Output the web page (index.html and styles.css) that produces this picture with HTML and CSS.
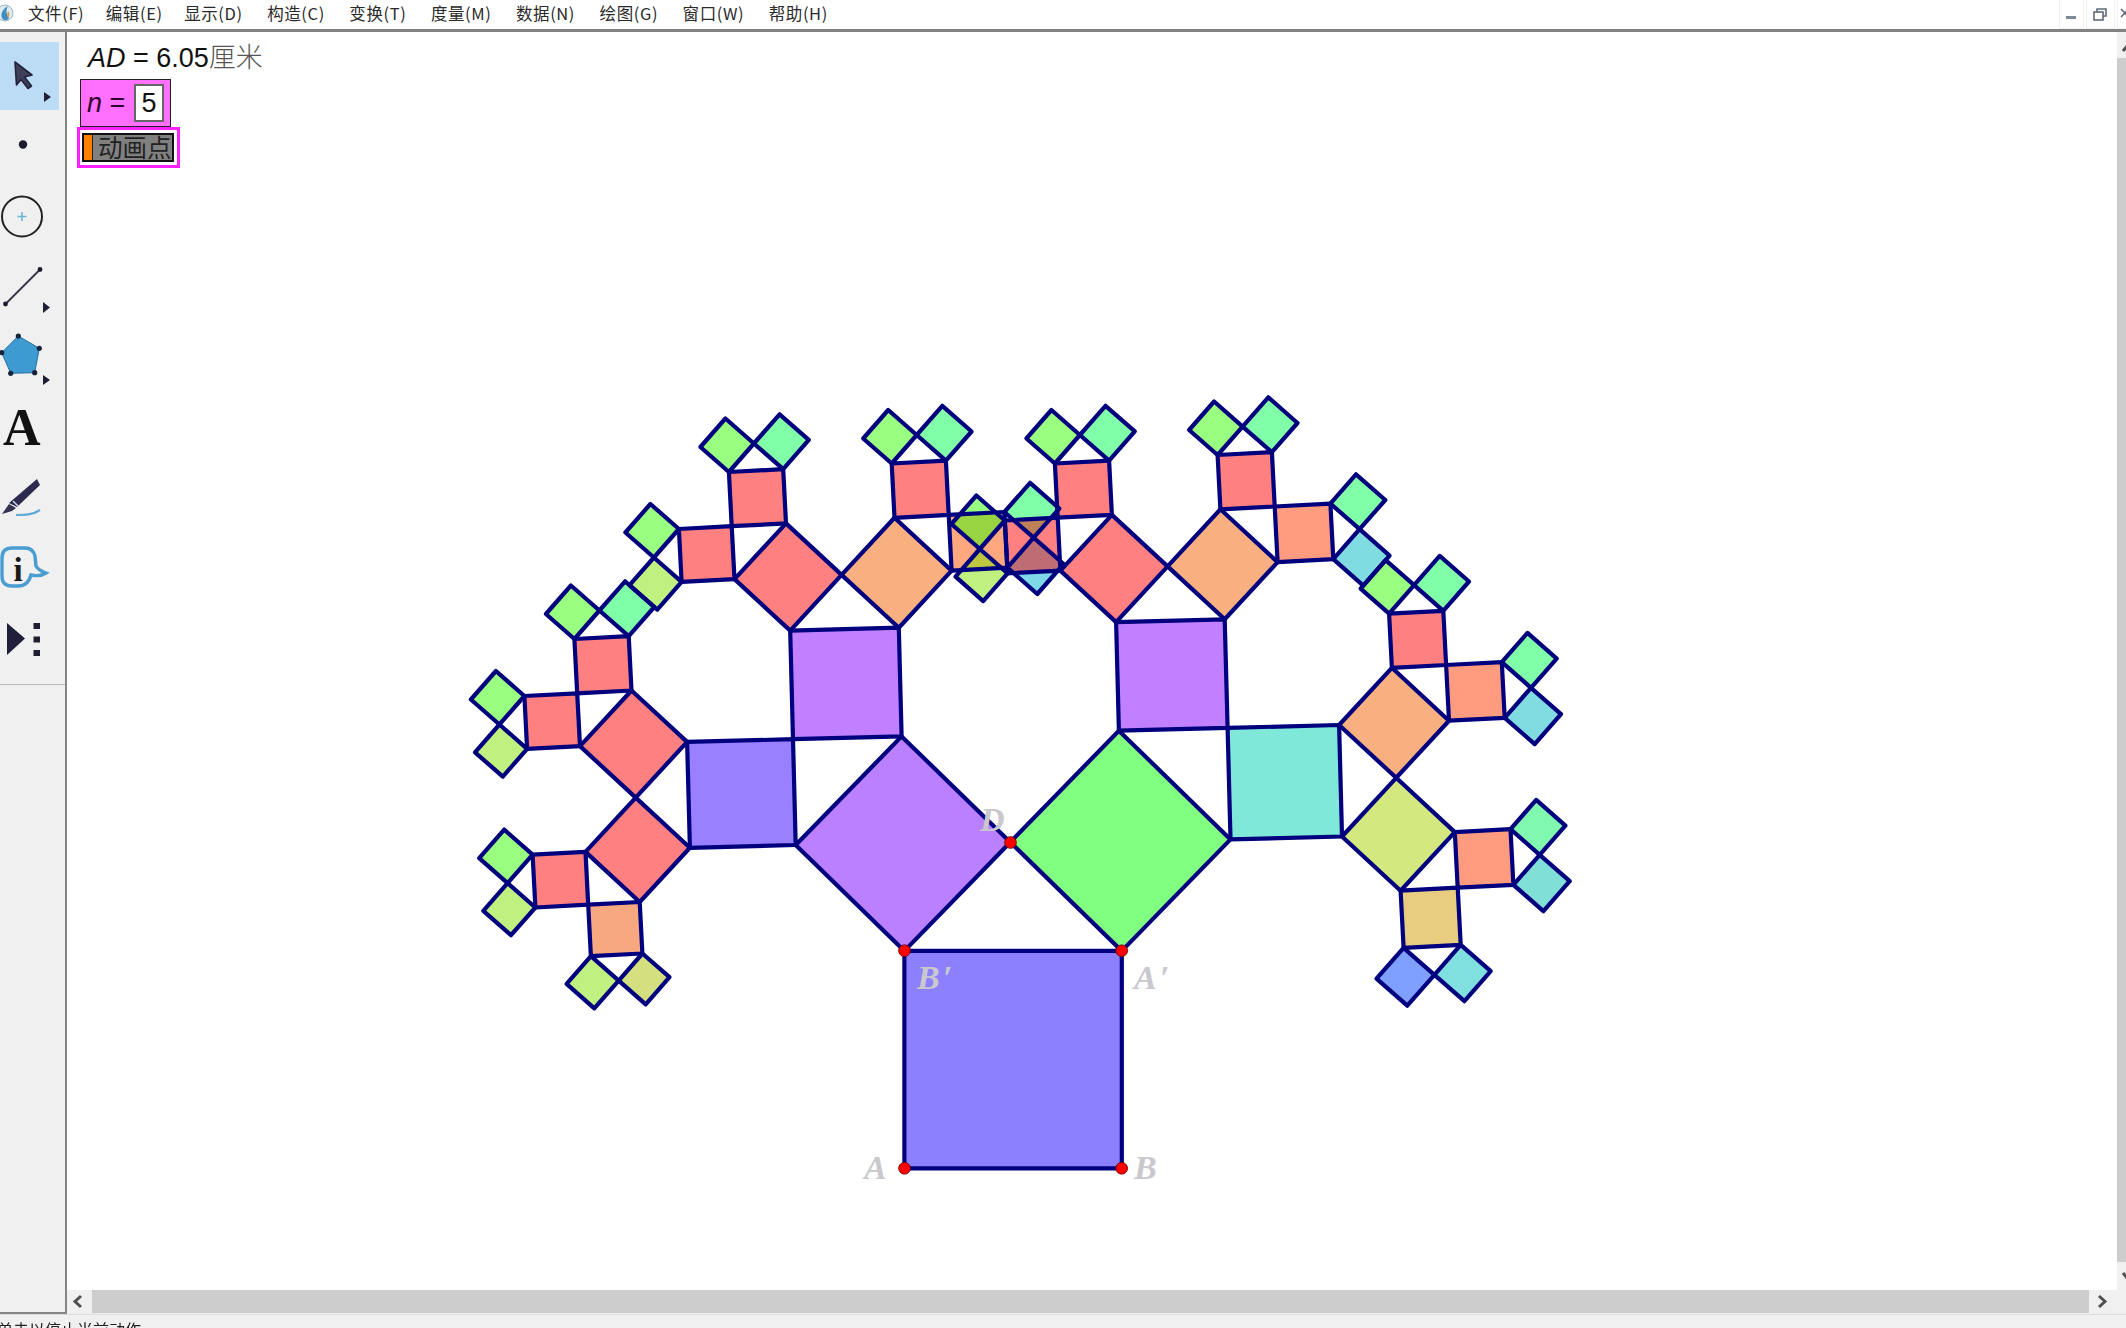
FILE: index.html
```html
<!DOCTYPE html>
<html lang="zh">
<head>
<meta charset="utf-8">
<title>几何画板</title>
<link rel="stylesheet" href="styles.css">
</head>
<body>
<div class="app">
  <header class="menubar">
    <svg class="appicon" viewBox="0 0 14 22"><circle cx="5" cy="11" r="8" fill="#dfeaf2" stroke="#9fb4c4"/><path d="M2 16 C0 11 4 6 8 4 C5 9 7 13 9 16 C7 19 4 19 2 16Z" fill="#3d8fc4"/><path d="M8 9 C10 11 10 14 8 16 C7 14 7 11 8 9Z" fill="#e0a040"/></svg>
    <nav class="menus">
      <span class="menu">文件(F)</span><span class="menu">编辑(E)</span><span class="menu">显示(D)</span><span class="menu">构造(C)</span><span class="menu">变换(T)</span><span class="menu">度量(M)</span><span class="menu">数据(N)</span><span class="menu">绘图(G)</span><span class="menu">窗口(W)</span><span class="menu">帮助(H)</span>
    </nav>
    <div class="winbtns">
      <div class="winbtn"><svg width="25" height="29" viewBox="0 0 25 29"><rect x="7" y="16" width="10" height="3" fill="#7d8a96"/></svg></div>
      <div class="winbtn wide"><svg width="29" height="29" viewBox="0 0 29 29"><rect x="8" y="12" width="9" height="8" fill="none" stroke="#5f6b76" stroke-width="1.6"/><path d="M11 12 V9 H20 V16 H17" fill="none" stroke="#5f6b76" stroke-width="1.6"/></svg></div>
      <div class="winbtn"><svg width="25" height="29" viewBox="0 0 25 29"><path d="M4 9 L12 17 M12 9 L4 17" stroke="#5f6b76" stroke-width="1.6"/></svg></div>
    </div>
  </header>

  <main class="workspace">
    <aside class="toolbar">
      <div class="tool active">
        <svg class="tool-icon" viewBox="0 42 65 68"><path d="M15 62 L32 75 L24.5 77 L31.5 86 L28 88.5 L21 79.5 L16.5 85Z" fill="#3f3f5a" stroke="#23233c" stroke-width="1.6" stroke-linejoin="round"/><path d="M44 92 L51 97 L44 102Z" fill="#1f1f38"/></svg>
      </div>
      <div class="tool">
        <svg class="tool-icon" viewBox="0 110 65 71"><circle cx="23" cy="144.5" r="4.2" fill="#1c1c30"/></svg>
      </div>
      <div class="tool">
        <svg class="tool-icon" viewBox="0 181 65 71"><circle cx="22" cy="216.5" r="20" fill="none" stroke="#222" stroke-width="2"/><path d="M22 212 V221 M17.5 216.5 H26.5" stroke="#6db5d8" stroke-width="1.6"/></svg>
      </div>
      <div class="tool">
        <svg class="tool-icon" viewBox="0 252 65 71"><path d="M5.5 304 L40 269.5" stroke="#33334a" stroke-width="1.8"/><circle cx="5.5" cy="304" r="2.4" fill="#1c1c30"/><circle cx="40" cy="269.5" r="2.4" fill="#1c1c30"/><path d="M43 302 L50 307.5 L43 313Z" fill="#1f1f38"/></svg>
      </div>
      <div class="tool">
        <svg class="tool-icon" viewBox="0 323 65 71"><path d="M18.3 336 L39.3 348.3 L34.7 372.7 L10.7 373.3 L1.7 352.7Z" fill="#3d9bd2" stroke="#2a6f9e" stroke-width="1"/><g fill="#17233a"><circle cx="18.3" cy="336" r="2.6"/><circle cx="39.3" cy="348.3" r="2.6"/><circle cx="34.7" cy="372.7" r="2.6"/><circle cx="10.7" cy="373.3" r="2.6"/><circle cx="1.7" cy="352.7" r="2.6"/></g><path d="M43 375 L50 380 L43 385Z" fill="#1f1f38"/></svg>
      </div>
      <div class="tool tool-text">A</div>
      <div class="tool">
        <svg class="tool-icon" viewBox="0 465 65 71"><path d="M37 479 L40 485 L17 507 L9 503Z" fill="#2b2b4f"/><path d="M9 504 L16 508 L12 511 L2 514Z" fill="#33334f"/><path d="M13 501 L18 506" stroke="#d8d8e0" stroke-width="1.5"/><path d="M16 515 C24 515 33 515 40 510" fill="none" stroke="#5fa9d4" stroke-width="2.2"/></svg>
      </div>
      <div class="tool">
        <svg class="tool-icon" viewBox="0 536 65 71"><path d="M12 548 H25 Q33 548 35 556 L36 566 Q38 570 46 573 Q40 577 31 575 Q28 586 18 586 H12 Q2 586 2 576 V558 Q2 548 12 548Z" fill="none" stroke="#4a9dd0" stroke-width="3.4"/><text class="info-i" x="18" y="581" text-anchor="middle">i</text></svg>
      </div>
      <div class="tool">
        <svg class="tool-icon" viewBox="0 607 65 71"><path d="M7 623 L25 638.5 L7 655Z" fill="#1f1f3c"/><rect x="33.5" y="623" width="6.5" height="6" fill="#1f1f30"/><rect x="33.5" y="636.5" width="6.5" height="6" fill="#1f1f30"/><rect x="33.5" y="650" width="6.5" height="6" fill="#1f1f30"/></svg>
      </div>
      <div class="tool-sep"></div>
    </aside>

    <section class="stage">
      <div class="stage-row">
        <div class="canvas">
          <svg id="tree" class="sketch" viewBox="67 31 2050 1258" width="2050" height="1258">
            <g id="fills"></g>
            <g id="edges" class="edges"></g>
            <text class="label" x="864" y="1178">A</text>
            <text class="label" x="1134" y="1178">B</text>
            <text class="label" x="1134" y="988">A′</text>
            <text class="label" x="917" y="988">B′</text>
            <text class="label" x="980" y="830">D</text>
            <circle class="pt" cx="904.5" cy="1167.3" r="5.8"/>
            <circle class="pt" cx="1121.7" cy="1167.3" r="5.8"/>
            <circle class="pt" cx="904.5" cy="949.7" r="5.8"/>
            <circle class="pt" cx="1121.7" cy="949.7" r="5.8"/>
            <circle class="pt" cx="1010.5" cy="841.5" r="5.8"/>
          </svg>
          <div class="readouts">
            <div class="measure"><i>AD</i> = 6.05<span class="unit">厘米</span></div>
            <div class="param"><span class="param-name"><i>n</i> =</span><span class="param-val">5</span></div>
            <div class="anim-btn"><div class="anim-inner"><span class="anim-bar"></span><span class="anim-text">动画点</span></div></div>
          </div>
        </div>
        <div class="vscroll">
          <div class="sb-btn v"><svg width="24" height="26" viewBox="0 0 24 26"><path d="M6 19 L11 13 L16 19" class="chev"/></svg></div>
          <div class="thumb v"></div>
          <div class="sb-btn vb"><svg width="24" height="28" viewBox="0 0 24 28"><path d="M6 11 L11 17 L16 11" class="chev"/></svg></div>
        </div>
      </div>
      <div class="hscroll">
        <div class="sb-btn h"><svg width="25" height="23" viewBox="0 0 25 23"><path d="M14 6 L8 11.5 L14 17" class="chev"/></svg></div>
        <div class="thumb h"></div>
        <div class="sb-btn h r"><svg width="27" height="23" viewBox="0 0 27 23"><path d="M10 6 L16 11.5 L10 17" class="chev"/></svg></div>
      </div>
    </section>
  </main>

  <footer class="status">单击以停止当前动作</footer>
</div>
<script src="app.js"></script>
</body>
</html>
```

FILE: styles.css
```css
* { box-sizing: border-box; }
html, body { margin: 0; padding: 0; background: #f0f0f0; }
.app {
  width: 2126px;
  height: 1328px;
  overflow: hidden;
  display: flex;
  flex-direction: column;
  font-family: "Liberation Sans", "Noto Sans CJK SC", sans-serif;
  filter: blur(0.55px);
}

/* menu bar */
.menubar {
  height: 32px;
  flex: none;
  display: flex;
  align-items: flex-start;
  background: #fff;
  border-bottom: 3px solid #828282;
}
.appicon { width: 14px; height: 22px; margin-top: 2px; flex: none; }
.menus { display: flex; gap: 24.5px; margin-left: 14px; height: 26px; align-items: center; }
.menu {
  font-family: "Noto Sans CJK SC", sans-serif;
  font-size: 16.5px;
  letter-spacing: 0.6px;
  color: #2a2a2a;
  line-height: 26px;
  white-space: nowrap;
}
.menu:nth-child(-n+2) { margin-right: -3px; }
.winbtns { margin-left: auto; display: flex; gap: 2px; margin-right: -16px; }
.winbtn { width: 25px; height: 29px; border: 1px solid #f0f0f0; border-top: 0; }
.winbtn.wide { width: 29px; }
.winbtn svg { display: block; margin: 0 -1px; }

/* workspace */
.workspace { flex: none; height: 1282px; display: flex; }
.toolbar {
  width: 67px;
  flex: none;
  padding-top: 10px;
  background: #f0f0f0;
  border-right: 2px solid #858585;
  border-bottom: 2px solid #858585;
}
.tool { height: 71px; }
.tool.active { height: 68px; background: #bcdcf5; width: 59px; }
.tool.active .tool-icon { width: 65px; height: 68px; }
.tool-icon { display: block; width: 65px; height: 71px; overflow: visible; }
.tool-text {
  font-family: "Liberation Serif", serif;
  font-weight: 700;
  font-size: 52px;
  line-height: 67px;
  padding-left: 3px;
  color: #111;
}
.info-i { font-family: "Liberation Serif", serif; font-weight: 700; font-size: 33px; fill: #1a1a1a; }
.tool-sep { height: 7px; border-bottom: 1px solid #b9b9b9; }

.stage { flex: 1; min-width: 0; display: flex; flex-direction: column; }
.stage-row { flex: none; height: 1258px; display: flex; }
.canvas { position: relative; flex: none; width: 2050px; background: #fff; }
.sketch { display: block; }
.edges polygon { fill: none; stroke: #00007f; stroke-width: 4.2; stroke-linejoin: round; }
.label {
  font-family: "Liberation Serif", serif;
  font-style: italic;
  font-weight: 700;
  font-size: 34px;
  letter-spacing: 3px;
  fill: #c9c9cd;
}
.pt { fill: #ff0000; stroke: #800000; stroke-width: 1; }

/* readouts on the sketch */
.readouts { position: absolute; left: 10px; top: 5px; display: flex; flex-direction: column; align-items: flex-start; }
.measure { font-size: 27px; line-height: 38px; color: #111; margin-left: 11px; white-space: nowrap; }
.unit { font-family: "Noto Sans CJK SC", sans-serif; color: #555; font-weight: 300; }
.param {
  margin-left: 3px;
  margin-top: 2px;
  width: 91px;
  height: 48px;
  background: #ff70ff;
  border: 1.5px solid #222;
  display: flex;
  align-items: center;
  justify-content: space-between;
  padding: 0 6px 0 6px;
  font-size: 27px;
  color: #111;
}
.param-name { color: #300030; }
.param-val {
  width: 30px;
  height: 38px;
  background: #fff;
  border: 2px solid #666;
  text-align: center;
  line-height: 35px;
}
.anim-btn { width: 103px; height: 41px; border: 3px solid #ff20ff; padding: 3px 3px 3px 2px; background: #fff; }
.anim-inner { height: 100%; border: 2px solid #111; background: #808080; display: flex; align-items: stretch; }
.anim-bar { width: 9px; background: #ff8000; margin-right: 5px; border-right: 1px solid #222; }
.anim-text { font-family: "Noto Sans CJK SC", sans-serif; font-size: 24.5px; line-height: 24px; color: #222; white-space: nowrap; }

/* scrollbars */
.vscroll { flex: none; width: 24px; display: flex; flex-direction: column; background: #f0f0f0; }
.sb-btn { flex: none; background: #f0f0f0; }
.sb-btn svg { display: block; }
.sb-btn.v { height: 26px; }
.sb-btn.vb { height: 28px; }
.thumb { background: #cdcdcd; }
.thumb.v { flex: 1; }
.chev { fill: none; stroke: #505050; stroke-width: 3; }
.hscroll { flex: none; height: 23px; display: flex; background: #f0f0f0; padding-right: 10px; }
.sb-btn.h { width: 25px; }
.sb-btn.h.r { width: 27px; }
.thumb.h { flex: 1; }

/* status */
.status {
  flex: 1;
  border-top: 1px solid #dcdcdc;
  background: #f0f0f0;
  padding: 4px 0 0 0;
  text-indent: -3px;
  font-family: "Noto Sans CJK SC", sans-serif;
  font-size: 16px;
  line-height: 20px;
  color: #222;
  overflow: hidden;
  white-space: nowrap;
}
```

FILE: app.js
```js
// Pythagoras tree, built recursively from the apex ratio of the first triangle.
var T = 0.487, H = Math.sqrt(T * (1 - T));
var RED = '#ff8080', OR = '#ff9c80', LG = '#98ff80', MG = '#80ffa8', YG = '#bff080';
var COLORS = {
  '': '#8c80ff', L: '#ba80ff', R: '#80ff80',
  LL: '#9880ff', LR: '#c080ff', RL: '#c080ff', RR: '#80e8d8',
  LLL: RED, LLR: RED, LRL: RED, LRR: '#f8b080', RLL: RED, RLR: '#f8b080', RRL: '#f8b080', RRR: '#d4e880',
  LLLL: '#f8a880', LLLR: RED, LLRL: RED, LLRR: RED, LRLL: RED, LRLR: RED, LRRL: RED, LRRR: '#ffa880',
  RLLL: RED, RLLR: RED, RLRL: RED, RLRR: OR, RRLL: RED, RRLR: OR, RRRL: OR, RRRR: '#e8cc80',
  LLLLL: '#d4e080', LLLLR: '#c0f080', LLLRL: YG, LLLRR: LG, LLRLL: YG, LLRLR: LG, LLRRL: LG, LLRRR: '#74ffa8',
  LRLLL: YG, LRLLR: LG, LRLRL: LG, LRLRR: MG, LRRLL: LG, LRRLR: MG, LRRRL: MG, LRRRR: '#70d8e8',
  RLLLL: YG, RLLLR: LG, RLLRL: LG, RLLRR: MG, RLRLL: LG, RLRLR: MG, RLRRL: MG, RLRRR: '#78dce0',
  RRLLL: LG, RRLLR: MG, RRLRL: MG, RRLRR: '#80dce0', RRRLL: '#80f8b0', RRRLR: '#80e0d8', RRRRL: '#80e0e0', RRRRR: '#80a0ff'
};
var NS = 'http://www.w3.org/2000/svg';
var fills = document.getElementById('fills');
var edges = document.getElementById('edges');

// Fills are half transparent, as in the original: overlaps darken.
function translucent(hex) {
  var n = parseInt(hex.slice(1), 16);
  var c = [n >> 16, (n >> 8) & 255, n & 255].map(function (v) { return Math.max(0, 2 * v - 255); });
  return 'rgba(' + c.join(',') + ',0.5)';
}

function square(p, q, path) {
  var dx = q[0] - p[0], dy = q[1] - p[1];
  var out = [dy, -dx];
  var p2 = [p[0] + out[0], p[1] + out[1]], q2 = [q[0] + out[0], q[1] + out[1]];
  var pts = [p, q, q2, p2].map(function (a) { return a[0].toFixed(1) + ',' + a[1].toFixed(1); }).join(' ');
  var f = document.createElementNS(NS, 'polygon');
  f.setAttribute('points', pts);
  f.setAttribute('fill', translucent(COLORS[path]));
  fills.appendChild(f);
  var e = document.createElementNS(NS, 'polygon');
  e.setAttribute('points', pts);
  edges.appendChild(e);
  if (path.length < 5) {
    var apex = [p2[0] + T * dx + H * out[0], p2[1] + T * dy + H * out[1]];
    square(p2, apex, path + 'L');
    square(apex, q2, path + 'R');
  }
}
square([904.4, 1167.3], [1121.8, 1167.3], '');
```
